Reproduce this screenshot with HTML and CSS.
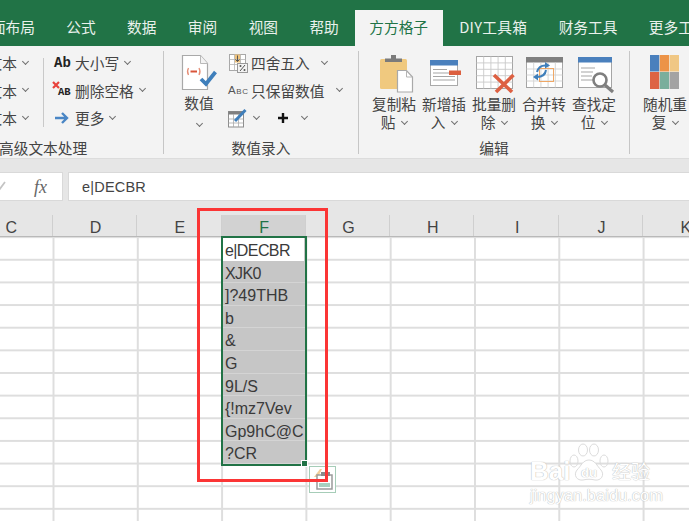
FILE: index.html
```html
<!DOCTYPE html>
<html lang="zh">
<head>
<meta charset="utf-8">
<title>方方格子</title>
<link rel="stylesheet" href="styles.css">
</head>
<body>
<div class="app">
  <nav class="tabs">
    <span class="tab tab-first">页面布局</span>
    <span class="tab">公式</span>
    <span class="tab">数据</span>
    <span class="tab">审阅</span>
    <span class="tab">视图</span>
    <span class="tab">帮助</span>
    <span class="tab tab-active">方方格子</span>
    <span class="tab tab-diy">DIY工具箱</span>
    <span class="tab">财务工具</span>
    <span class="tab">更多工具</span>
  </nav>

  <section class="ribbon">
    <div class="group g1">
      <div class="body">
        <div class="rows cut">
          <div class="row">文本<i class="chev"></i></div>
          <div class="row">文本<i class="chev"></i></div>
          <div class="row">文本<i class="chev"></i></div>
        </div>
        <div class="vsep"></div>
        <div class="rows textcol">
          <div class="row"><span class="ico ab">Ab</span>大小写<i class="chev"></i></div>
          <div class="row">
            <span class="ico">
              <svg width="20" height="20" viewBox="0 0 20 20"><path d="M1 2l6 6M7 2l-6 6" stroke="#e8423c" stroke-width="2.2"/></svg>
              <span class="ab2">AB</span>
            </span>删除空格<i class="chev"></i></div>
          <div class="row">
            <span class="ico">
              <svg width="20" height="20" viewBox="0 0 20 20"><path d="M3 10h11M10 5l5 5-5 5" fill="none" stroke="#4a86c5" stroke-width="2.4"/></svg>
            </span>更多<i class="chev"></i></div>
        </div>
      </div>
      <div class="label label-left">高级文本处理</div>
    </div>

    <div class="group g2">
      <div class="body">
        <div class="big big-num">
          <svg class="big-icon" width="50" height="45" viewBox="0 0 50 45">
            <path d="M8.500 4.500h18l7 8v26h-25z" fill="#fff" stroke="#a9a9a9" stroke-width="1.200"/>
            <path d="M26.500 4.500v8h7" fill="#f3f3f3" stroke="#b9b9b9"/>
            <path d="M14.500 17q-2 3.500 0 7M25 17q2 3.500 0 7" fill="none" stroke="#e58f78" stroke-width="1.300"/>
            <path d="M16.500 20.500h6.500" stroke="#d9553a" stroke-width="2"/>
            <path d="M27 28l5 5 9.500-12" fill="none" stroke="#3f7fbb" stroke-width="3.800"/>
          </svg>
          <div class="big-text">数值</div>
          <div class="big-chev"><i class="chev"></i></div>
        </div>
        <div class="rows numcol">
          <div class="row"><span class="ico">
            <svg width="20" height="20" viewBox="0 0 20 20">
              <rect x="1.500" y="1.500" width="16" height="16" fill="#fff" stroke="#a8a8a8"/>
              <rect x="6.500" y="1.500" width="6" height="8" fill="#eec27c"/>
              <path d="M1.500 6.500h16M1.500 11.500h16M6.500 1.500v16M12.500 1.500v16" stroke="#b5b5b5" stroke-width=".8"/>
              <path d="M9.500 2.500v6M7.500 6.500l2 2 2-2" fill="none" stroke="#555" stroke-width="1"/>
              <rect x="9.500" y="10.500" width="10" height="9" fill="#f3f3f3" stroke="#999"/>
              <path d="M12 18l5-6" stroke="#555"/><circle cx="12.500" cy="13" r="1" fill="#555"/><circle cx="16.500" cy="17" r="1" fill="#555"/>
            </svg></span><span class="w1">四舍五入</span><i class="chev"></i></div>
          <div class="row"><span class="ico abc">Abc</span><span class="w2">只保留数值</span><i class="chev"></i></div>
          <div class="row tools">
            <span class="ico">
              <svg width="20" height="20" viewBox="0 0 20 20">
                <rect x=".5" y="3.500" width="15" height="15.500" fill="#fff" stroke="#8d8d8d"/>
                <rect x=".5" y="3.500" width="15" height="3" fill="#808080"/>
                <path d="M.5 11h15M.5 15h15M5.500 6v13M10.500 6v13" stroke="#aaa" stroke-width=".8"/>
                <path d="M7 13L17.500 2" stroke="#3f7fbb" stroke-width="3"/>
              </svg></span><i class="chev chev-tool"></i>
            <svg class="plus" width="12" height="12" viewBox="0 0 12 12"><path d="M6 1v10M1 6h10" stroke="#111" stroke-width="2.400"/></svg>
            <i class="chev"></i>
          </div>
        </div>
      </div>
      <div class="label">数值录入</div>
    </div>

    <div class="group g3">
      <div class="body">
        <div class="big">
          <svg class="big-icon" width="50" height="45" viewBox="0 0 50 45">
            <rect x="11" y="8" width="27" height="30" rx="1.500" fill="#f0c97f"/>
            <path d="M16 11V7.500h6V4h5v3.500h6V11z" fill="#7b7b7b"/>
            <path d="M28.500 19.500h9l6 6.500v15h-15z" fill="#fff" stroke="#a9a9a9" stroke-width="1.200"/>
            <path d="M37.500 19.500v6.500h6" fill="none" stroke="#b5b5b5"/>
          </svg>
          <div class="big-text">复制粘<br>贴<i class="chev"></i></div>
        </div>
        <div class="big">
          <svg class="big-icon" width="50" height="45" viewBox="0 0 50 45">
            <rect x="11.500" y="9.500" width="27" height="25" fill="#fff" stroke="#a9a9a9"/>
            <rect x="11" y="9" width="28" height="5.500" fill="#4a80bd"/>
            <path d="M14 18.500h14M14 22h22M14 25.500h22M14 29h22" stroke="#a5a5a5"/>
            <rect x="30" y="19.500" width="12" height="4.500" fill="#dc6040"/>
          </svg>
          <div class="big-text">新增插<br>入<i class="chev"></i></div>
        </div>
        <div class="big">
          <svg class="big-icon" width="50" height="45" viewBox="0 0 50 45">
            <rect x="7.500" y="5.500" width="36" height="32" fill="#fff" stroke="#a5a5a5"/>
            <path d="M14.700 5.500v32M21.900 5.500v32M29.100 5.500v32M36.300 5.500v32M7.500 11.900h36M7.500 18.300h36M7.500 24.700h36M7.500 31.100h36" stroke="#c9c9c9" stroke-width=".9"/>
            <path d="M25 24l18 17M44.500 24L27 41" stroke="#dd6042" stroke-width="3.600"/>
          </svg>
          <div class="big-text">批量删<br>除<i class="chev"></i></div>
        </div>
        <div class="big">
          <svg class="big-icon" width="50" height="45" viewBox="0 0 50 45">
            <rect x="7.500" y="6.500" width="36" height="30" fill="#fff" stroke="#a5a5a5"/>
            <rect x="7" y="6" width="37" height="5.500" fill="#7f7f7f"/>
            <path d="M14.700 11.500v25M21.900 11.500v25M29.100 11.500v25M36.300 11.500v25M7.500 18h36M7.500 24h36M7.500 30h36" stroke="#d2d2d2" stroke-width=".9"/>
            <rect x="20.500" y="17.500" width="14" height="13" fill="none" stroke="#efa765"/>
            <path d="M18 21q2-7 9-6.500" fill="none" stroke="#3f7fbb" stroke-width="2"/><path d="M26 11l5 3.500-5 3z" fill="#3f7fbb"/>
            <path d="M27 19q-1 7-9 7" fill="none" stroke="#3f7fbb" stroke-width="2"/><path d="M19 22.500l-5 3.500 5 3.500z" fill="#3f7fbb"/>
          </svg>
          <div class="big-text">合并转<br>换<i class="chev"></i></div>
        </div>
        <div class="big">
          <svg class="big-icon" width="50" height="45" viewBox="0 0 50 45">
            <rect x="9.500" y="6.500" width="33" height="30" fill="#fff" stroke="#a5a5a5"/>
            <rect x="9" y="6" width="34" height="5.500" fill="#4a80bd"/>
            <path d="M12 17h14M12 21h12M12 25h11M12 29h12" stroke="#a5a5a5"/>
            <circle cx="31" cy="29" r="6.500" fill="#fff" stroke="#7f7f7f" stroke-width="2.600"/>
            <path d="M36 34l8 7" stroke="#7f7f7f" stroke-width="3.200"/>
          </svg>
          <div class="big-text">查找定<br>位<i class="chev"></i></div>
        </div>
      </div>
      <div class="label">编辑</div>
    </div>

    <div class="group g4">
      <div class="body">
        <div class="big">
          <svg class="big-icon" width="50" height="45" viewBox="0 0 50 45">
            <rect x="10" y="4" width="9.300" height="16.500" fill="#4a80bd"/>
            <rect x="19.800" y="4" width="9.300" height="16.500" fill="#ec9347"/>
            <rect x="29.600" y="4" width="9.400" height="16.500" fill="#f0c784"/>
            <rect x="10" y="21" width="9.300" height="17" fill="#dd6444"/>
            <rect x="19.800" y="21" width="9.300" height="17" fill="#7aae9c"/>
            <rect x="29.600" y="21" width="9.400" height="17" fill="#a3a3a3"/>
          </svg>
          <div class="big-text">随机重<br>复<i class="chev"></i></div>
        </div>
      </div>
    </div>
  </section>

  <section class="formula">
    <div class="namebox">
      <svg class="check" width="8" height="12" viewBox="0 0 8 12"><path d="M-3 7l2 2 6-8" fill="none" stroke="#c4c4c4" stroke-width="1.800"/></svg>
      <span class="fx">fx</span>
    </div>
    <div class="input">e|DECBR</div>
  </section>

  <section class="sheet-wrap">
    <div class="cols">
      <span class="col col-first">C</span>
      <span class="col">D</span>
      <span class="col">E</span>
      <span class="col col-sel">F</span>
      <span class="col">G</span>
      <span class="col">H</span>
      <span class="col">I</span>
      <span class="col">J</span>
      <span class="col">K</span>
    </div>
    <div class="sheet">
      <div class="selection">
        <div class="cell cell-active tight">e|DECBR</div>
        <div class="cell tight">XJK0</div>
        <div class="cell">]?49THB</div>
        <div class="cell">b</div>
        <div class="cell">&amp;</div>
        <div class="cell">G</div>
        <div class="cell">9L/S</div>
        <div class="cell">{!mz7Vev</div>
        <div class="cell">Gp9hC@C</div>
        <div class="cell">?CR</div>
        <span class="handle"></span>
        <div class="paste">
          <svg width="24" height="24" viewBox="0 0 24 24">
            <path d="M9 1l-6 8h4l-2 6 7-8H8l3-6z" fill="#f3cf9a"/>
            <rect x="6" y="7" width="15" height="14" fill="#fff" stroke="#9a9a9a" stroke-width="1.500"/>
            <rect x="10" y="4" width="9" height="4" fill="#8a8a8a"/>
            <rect x="8" y="15" width="11" height="4" fill="#a8d0bf"/>
          </svg>
        </div>
      </div>
    </div>
    <div class="redbox"></div>
    <div class="watermark">
      <div class="wm-top">
        <span class="wm-bai">Bai</span>
        <svg class="wm-paw" width="44" height="40" viewBox="0 0 44 40">
          <g fill="none" stroke="#dcdcdc" stroke-width="1">
            <ellipse cx="7" cy="18" rx="4" ry="6"/>
            <ellipse cx="16" cy="7" rx="4.500" ry="6"/>
            <ellipse cx="27" cy="7" rx="4.500" ry="6"/>
            <ellipse cx="37" cy="18" rx="4" ry="6"/>
            <path d="M22 17c-6 0-8 6-12 10-4 5 0 11 6 10 4-1 8-1 12 0 6 1 10-5 6-10-4-4-6-10-12-10z" fill="#fff"/>
          </g>
          <text x="22" y="34" class="wm-du">du</text>
        </svg>
        <span class="wm-jy">经验</span>
      </div>
      <div class="wm-url">jingyan.baidu.com</div>
    </div>
  </section>
</div>
</body>
</html>
```

FILE: styles.css
```css
* { box-sizing: border-box; }
html, body { margin: 0; padding: 0; }
body {
  width: 689px;
  height: 521px;
  overflow: hidden;
  background: #fff;
  font-family: "Noto Sans CJK SC", "Liberation Sans", sans-serif;
  font-size: 14.7px;
  color: #444;
}
.app { width: 689px; height: 521px; overflow: hidden; position: relative; }

.tabs {
  display: flex;
  align-items: flex-end;
  height: 46px;
  background: #217346;
  white-space: nowrap;
}
.tab {
  flex: none;
  height: 36px;
  line-height: 34px;
  padding: 0 15.7px;
  color: #e9f1ec;
}
.tab-first { margin-left: -39.500px; }
.tab-active {
  padding: 0 14.500px;
  margin-left: .3px;
  background: #f3f3f3;
  color: #217346;
}
.tab-diy { letter-spacing: .3px; margin-left: 1px; }

.ribbon {
  display: flex;
  height: 113px;
  background: #f3f3f3;
  border-bottom: 1px solid #dcdcdc;
  white-space: nowrap;
  overflow: hidden;
}
.group {
  flex: none;
  display: flex;
  flex-direction: column;
  height: 103px;
  margin-top: 5px;
  border-right: 1px solid #c6c6c6;
}
.g1 { width: 164px; }
.g2 { width: 195px; padding-left: 10px; }
.g3 { width: 271px; padding-left: 10px; }
.g4 { width: 59px; padding-left: 10px; border-right: 0; }
.body { display: flex; height: 85px; }
.label {
  height: 18px;
  line-height: 18px;
  text-align: center;
  margin: 3px 0 -3px -10px;
}
.label-left { text-align: left; margin-left: -1px; }

.rows { display: flex; flex-direction: column; margin-top: -2px; }
.row { display: flex; align-items: center; height: 27.500px; flex: none; }
.cut {
  width: 43px;
  align-items: flex-end;
  padding-right: 15px;
}
.vsep {
  flex: none;
  width: 1px;
  height: 69px;
  margin-top: 7px;
  background: #c9c9c9;
}
.textcol { padding-left: 8px; }
.numcol { padding-left: 3px; }

.ico {
  flex: none;
  position: relative;
  width: 20px;
  height: 20px;
  margin-right: 3px;
  display: block;
}
.ico svg { display: block; }
.ab {
  font: bold 14px/20px "Liberation Mono", monospace;
  color: #222;
  padding-left: 2px;
}
.ab2 {
  position: absolute;
  left: 6px;
  top: 5px;
  font: bold 10.500px/14px "Liberation Mono", monospace;
  color: #222;
}
.abc {
  font: 11.500px/20px "Liberation Sans", sans-serif;
  font-variant: small-caps;
  letter-spacing: .6px;
  color: #555;
}
.chev {
  display: inline-block;
  flex: none;
  width: 5px;
  height: 5px;
  margin: -3px 0 0 6px;
  border-right: 1px solid #707070;
  border-bottom: 1px solid #707070;
  transform: rotate(45deg);
}
.w1 + .chev { margin-left: 12.500px; }
.w2 + .chev { margin-left: 13px; }
.tools .chev-tool { margin-left: 3px; }
.tools .plus { margin: 0 10px 0 18px; }
.tools .plus + .chev { margin-left: 3px; }

.big {
  flex: none;
  width: 50px;
  display: flex;
  flex-direction: column;
  align-items: center;
  text-align: center;
}
.big-icon { display: block; flex: none; }
.big-text { line-height: 18px; margin-top: -1px; }
.big-text .chev { margin-bottom: 3px; margin-left: 7px; vertical-align: middle; }
.big-chev { height: 18px; line-height: 16px; }
.big-chev .chev { margin: 0; }
.big-num { margin-right: 1px; }
.big-num .big-text { margin-top: -2px; }

.formula {
  display: flex;
  height: 56px;
  padding: 13px 0 13px;
  gap: 5px;
  background: #e6e6e6;
}
.namebox {
  flex: none;
  display: flex;
  align-items: center;
  width: 63px;
  height: 29px;
  background: #fff;
  border: 1px solid #d9d9d9;
  border-left: 0;
}
.fx {
  margin-left: 26px;
  font: italic 18px/24px "Liberation Serif", serif;
  color: #666;
}
.input {
  flex: 1;
  height: 29px;
  padding-left: 13px;
  background: #fff;
  border: 1px solid #d9d9d9;
  border-right: 0;
  font: 14.500px/28px "Liberation Sans", sans-serif;
  letter-spacing: .2px;
  color: #444;
}

.sheet-wrap { position: relative; height: 306px; }
.cols {
  display: flex;
  height: 22px;
  background: #e6e6e6;
  border-bottom: 1px solid #b9b9b9;
}
.col {
  flex: none;
  width: 84.300px;
  padding-left: 2px;
  text-align: center;
  font: 16px/25px "Liberation Sans", sans-serif;
  color: #444;
  border-right: 1px solid #cfcfcf;
}
.col-first { margin-left: -31.300px; }
.col-sel { background: #d2d2d2; color: #217346; }

.sheet {
  height: 284px;
  padding-left: 221px;
  background-color: #fff;
  background-image:
    linear-gradient(to right, #dedede 2px, transparent 2px),
    linear-gradient(to bottom, #dedede 2px, transparent 2px);
  background-size: 84.300px 100%, 100% 22.650px;
  background-position: 52.500px 0, 0 21.800px;
}
.selection {
  position: relative;
  width: 86px;
  height: 230px;
  border: 2px solid #217346;
  background: #c6c6c6;
  transform: translateY(-1px);
}
.cell {
  height: 22.600px;
  padding-left: 2px;
  font: 16px/25px "Liberation Sans", sans-serif;
  color: #3a3a3a;
  white-space: nowrap;
  overflow: hidden;
  border-bottom: 1px solid #d4d4d4;
}
.cell:last-of-type { border-bottom: 0; }
.cell-active { background: #fff; margin-right: 1px; border-bottom: 0; }
.tight { letter-spacing: -.6px; }
.handle {
  position: absolute;
  right: -3px;
  bottom: -3px;
  width: 7px;
  height: 7px;
  background: #217346;
  border: 1px solid #fff;
}
.paste {
  position: absolute;
  left: 86px;
  top: 228px;
  width: 27px;
  height: 27px;
  padding: 1px;
  background: #fff;
  border: 1px solid #a6cdb8;
}
.paste svg { display: block; }

.redbox {
  position: absolute;
  left: 197px;
  top: -7px;
  width: 131px;
  height: 274px;
  border: 3.500px solid #fb3535;
}

.watermark {
  position: absolute;
  left: 530px;
  top: 228px;
  width: 125px;
  color: #fff;
}
.wm-top { display: flex; align-items: flex-end; }
.wm-bai, .wm-jy, .wm-url, .wm-du {
  text-shadow: 0 0 1px #bdbdbd, 0 0 1px #bdbdbd;
}
.wm-bai { font: bold 26px/24px "Liberation Sans", sans-serif; width: 43px; }
.wm-paw { flex: none; margin: 0 -1px 0 -6px; }
.wm-du {
  font: bold 13px "Liberation Sans", sans-serif;
  fill: #fff;
  text-anchor: middle;
}
.wm-jy { font-size: 19px; line-height: 24px; margin-left: 2px; }
.wm-url {
  font: 16.500px/18px "Liberation Sans", sans-serif;
  margin-top: 3px;
}
```
